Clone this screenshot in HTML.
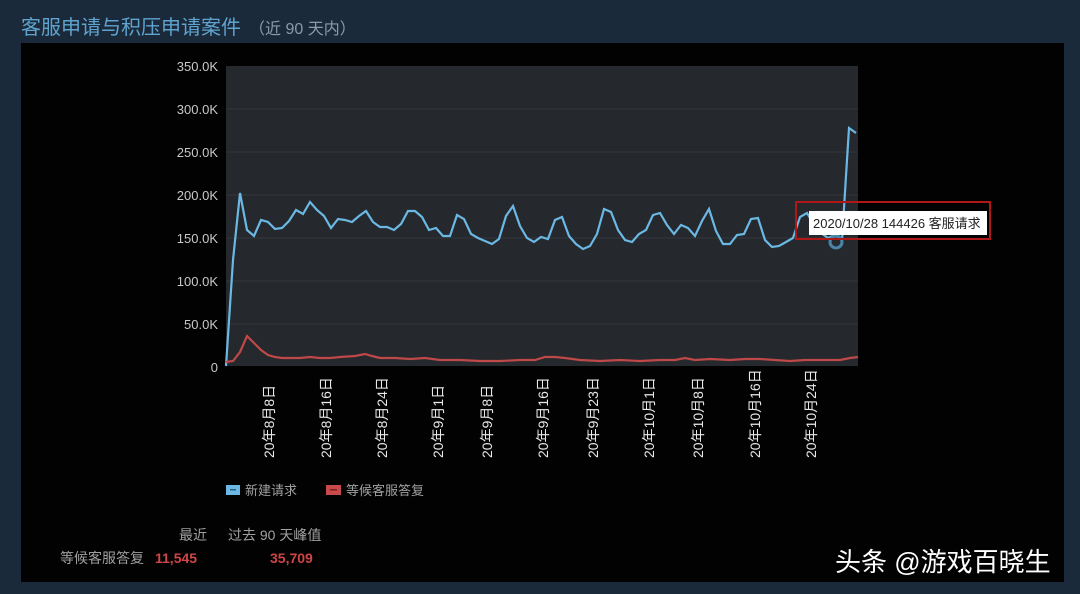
<!DOCTYPE html>
<html><head><meta charset="utf-8"><style>
body{margin:0;width:1080px;height:594px;background:#1b2a3b;overflow:hidden;font-family:"Liberation Sans","Noto Sans CJK SC",sans-serif;position:relative}
.title{position:absolute;left:21px;top:11px;font-size:20px;color:#5fa4cf}
.title span{font-size:16px;color:#8d9aa6;margin-left:8px}
.panel{position:absolute;left:21px;top:43px;width:1043px;height:539px;background:#020203}
</style></head><body>
<div class="title">客服申请与积压申请案件<span>（近 90 天内）</span></div>
<div class="panel"></div>
<svg width="1080" height="594" style="position:absolute;left:0;top:0">
<rect x="226" y="66" width="632" height="300" fill="#25282c"/>
<g stroke="#33373c" stroke-width="1">
<line x1="226" y1="109" x2="858" y2="109"/><line x1="226" y1="152" x2="858" y2="152"/><line x1="226" y1="195" x2="858" y2="195"/><line x1="226" y1="238" x2="858" y2="238"/><line x1="226" y1="281" x2="858" y2="281"/><line x1="226" y1="324" x2="858" y2="324"/>
</g>
<g font-size="13" fill="#c8c8c8" text-anchor="end" font-family="Liberation Sans,sans-serif">
<text x="218" y="71">350.0K</text><text x="218" y="114">300.0K</text><text x="218" y="157">250.0K</text><text x="218" y="200">200.0K</text><text x="218" y="243">150.0K</text><text x="218" y="286">100.0K</text><text x="218" y="329">50.0K</text><text x="218" y="372">0</text>
</g>
<polyline fill="none" stroke="#6bb8e4" stroke-width="2.2" points="226,366 233,260 240,193 247,230 254,236 261,220 268,222 275,229 282,228 289,221 296,210 303,214 310,202 317,210 324,216 331,228 338,219 345,220 352,222 359,216 366,211 373,222 380,227 387,227 394,230 401,224 408,211 415,211 422,217 429,230 436,228 443,236 450,236 457,215 464,219 471,234 478,238 485,241 492,244 499,239 506,216 513,206 520,226 527,238 534,242 541,237 548,239 555,220 562,217 569,236 576,244 583,249 590,246 597,234 604,209 611,212 618,230 625,240 632,242 639,234 646,230 653,215 660,213 667,225 674,234 681,225 688,228 695,236 702,221 709,209 716,231 723,244 730,244 737,235 744,234 751,219 758,218 765,240 772,247 779,246 786,242 793,238 800,217 807,213 814,225 821,233 828,238 835,235 842,240 849,128 856,133"/>
<polyline fill="none" stroke="#bf4848" stroke-width="2.2" points="226,362 233,361 240,352 247,336 254,343 261,350 268,355 275,357 282,358 290,358 300,358 310,357 320,358 330,358 340,357 355,356 365,354 372,356 380,358 395,358 410,359 425,358 440,360 460,360 480,361 500,361 520,360 535,360 545,357 555,357 565,358 580,360 600,361 620,360 640,361 660,360 675,360 685,358 695,360 710,359 730,360 745,359 760,359 775,360 790,361 805,360 820,360 840,360 850,358 858,357"/>
<circle cx="836" cy="242" r="6" fill="none" stroke="#4a85aa" stroke-width="3"/>
<rect x="796" y="202" width="194" height="37" fill="none" stroke="#b01818" stroke-width="2"/>
<rect x="809" y="211" width="178" height="24" fill="#fff"/>
<text x="813" y="228" font-size="13" fill="#222" font-family="Liberation Sans,Noto Sans CJK SC,sans-serif">2020/10/28 144426 客服请求</text>
<g font-size="14" fill="#e8e8e8" font-family="Liberation Sans,Noto Sans CJK SC,sans-serif">
<text transform="translate(274,458) rotate(-90)">20年8月8日</text>
<text transform="translate(331,458) rotate(-90)">20年8月16日</text>
<text transform="translate(387,458) rotate(-90)">20年8月24日</text>
<text transform="translate(443,458) rotate(-90)">20年9月1日</text>
<text transform="translate(492,458) rotate(-90)">20年9月8日</text>
<text transform="translate(548,458) rotate(-90)">20年9月16日</text>
<text transform="translate(598,458) rotate(-90)">20年9月23日</text>
<text transform="translate(654,458) rotate(-90)">20年10月1日</text>
<text transform="translate(703,458) rotate(-90)">20年10月8日</text>
<text transform="translate(760,458) rotate(-90)">20年10月16日</text>
<text transform="translate(816,458) rotate(-90)">20年10月24日</text>
</g>
<rect x="226" y="485" width="14" height="10" fill="#6bb8e4"/><rect x="230" y="489" width="6" height="1.5" fill="#2a5f80"/>
<rect x="326" y="485" width="15" height="10" fill="#c84a4a"/><rect x="330" y="489" width="7" height="1.5" fill="#7a2020"/>
<g font-size="13" fill="#a0a0a0" font-family="Liberation Sans,Noto Sans CJK SC,sans-serif">
<text x="245" y="495">新建请求</text><text x="346" y="495">等候客服答复</text>
<text x="179" y="540" font-size="14">最近</text><text x="228" y="540" font-size="14">过去 90 天峰值</text>
<text x="60" y="563" font-size="14">等候客服答复</text>
</g>
<g font-size="14" fill="#d04545" font-weight="bold" font-family="Liberation Sans,sans-serif">
<text x="155" y="563">11,545</text><text x="270" y="563">35,709</text>
</g>
<text x="835" y="571" font-size="26" fill="#ffffff" font-family="Liberation Sans,Noto Sans CJK SC,sans-serif">头条 @游戏百晓生</text>
</svg>
</body></html>
